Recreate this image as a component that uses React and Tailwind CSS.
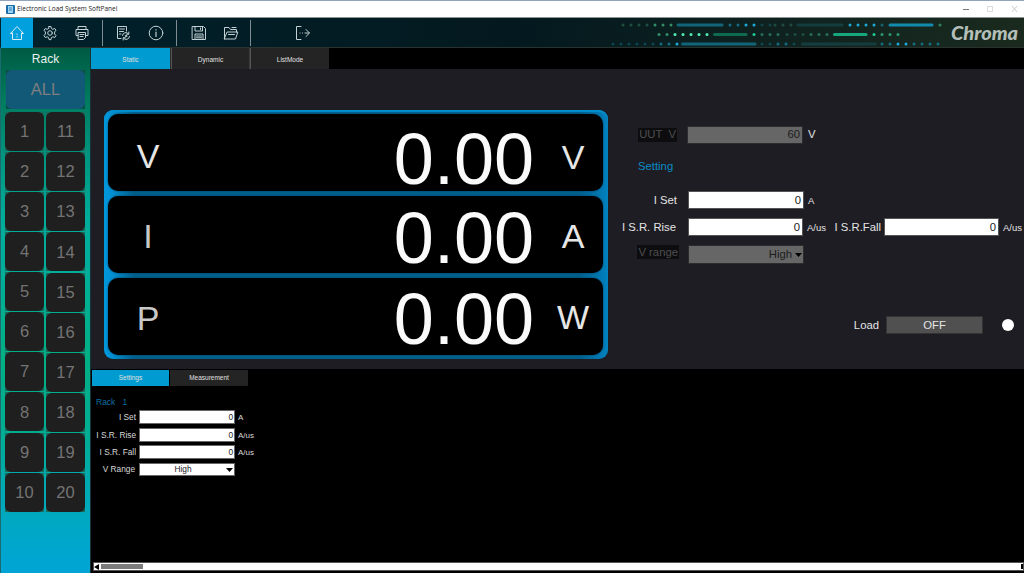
import clsx from 'clsx'

const READOUTS = [
  { name: 'V', unit: 'V', dim: 'text-[#e6e6e6]', value: 'mt-[12px]', label: 'mt-[6px]', unitPos: 'mt-[9px]' },
  { name: 'I', unit: 'A', dim: 'text-[#c8c8c8]', value: 'mt-[6px]', label: 'mt-[3px]', unitPos: 'mt-[2px]' },
  { name: 'P', unit: 'W', dim: 'text-[#c8c8c8]', value: 'mt-[5px]', label: 'mt-[2px]', unitPos: 'mt-[1px]' },
]

// [color, opacity, y, x1, x2], a dot when x1 === x2
const dots = (color, opacity, y, from, count) =>
  Array.from({ length: count }, (_, i) => [color, opacity, y, from + i * 8, from + i * 8])

const TRACES = [
  ...dots('#3d8a68', 0.45, 7, 23, 4), ...dots('#3fa97c', 0.8, 7, 55, 3),
  ['#126478', 1, 7, 78, 122],
  ...dots('#157f9c', 0.8, 7, 130, 2), ...dots('#1aa9d8', 1, 7, 146, 2),
  ...dots('#157f9c', 0.35, 7, 162, 2), ...dots('#3d8a68', 0.4, 7, 175, 3),
  ['#153d3f', 1, 7, 198, 242],
  ...dots('#1aa9d8', 1, 7, 250, 4), ...dots('#157f9c', 0.7, 7, 282, 1),
  ['#128bae', 1, 7, 290, 332], ...dots('#3fa97c', 0.7, 7, 340, 1),
  ...dots('#3fa97c', 0.8, 16.5, 59, 2), ...dots('#52edb0', 1, 16.5, 75, 5),
  ['#0f6b50', 1, 16.5, 114.5, 146],
  ...dots('#1fcb90', 1, 16.5, 154, 1), ...dots('#2f9169', 0.7, 16.5, 162, 3),
  ...dots('#2f9169', 0.4, 16.5, 187, 3), ...dots('#2f9169', 0.7, 16.5, 211, 3),
  ['#16a87c', 1, 16.5, 234.5, 266],
  ...dots('#1fcb90', 1, 16.5, 274, 1), ...dots('#2aa877', 0.9, 16.5, 282, 3),
  ...dots('#157f9c', 0.4, 26, 13, 6), ...dots('#157f9c', 0.8, 26, 61, 2),
  ...dots('#1aa9d8', 1, 26, 77, 1),
  ['#126478', 1, 26, 82.5, 155],
  ...dots('#157f9c', 0.4, 26, 162, 5), ...dots('#157f9c', 0.6, 26, 178, 2),
  ['#153d3f', 1, 26, 202.5, 275.5],
  ...dots('#157f9c', 0.8, 26, 282, 2), ...dots('#1aa9d8', 1, 26, 298, 2),
  ...dots('#157f9c', 0.8, 26, 314, 4),
]

function Icon({ className, children }) {
  return (
    <svg viewBox="0 0 16 16" className={clsx('size-4 shrink-0', className)} fill="none"
         stroke="#c3d0d4" strokeWidth="1" strokeLinejoin="round" strokeLinecap="round">
      {children}
    </svg>
  )
}

function TitleBar() {
  return (
    <header className="flex h-[18px] items-center border-t border-b border-t-[#91a3bd] border-b-[#8c9494] bg-white">
      <svg viewBox="0 0 9 9" className="ml-[6px] size-[9px]">
        <rect width="9" height="9" rx="1" fill="#1b6ea8" />
        <rect x="2" y="1" width="5" height="7" fill="#9bd3f2" />
        <path d="M3 3h3M3 5h3" stroke="#1b6ea8" strokeWidth=".8" />
      </svg>
      <span className="ml-[2px] whitespace-nowrap font-['Open_Sans',sans-serif] text-[6.5px] leading-none text-[#222]">
        Electronic Load System SoftPanel
      </span>
      <svg viewBox="0 0 60 10" className="ml-auto mr-[3px] h-[10px] w-[60px]" fill="none" strokeWidth="1">
        <path d="M2 5.5h6" stroke="#777" />
        <rect x="26.5" y="2.5" width="5" height="5" stroke="#ddd" />
        <path d="M51 2l5 6M56 2l-5 6" stroke="#ccc" />
      </svg>
    </header>
  )
}

function Divider({ className }) {
  return <i className={clsx('h-[26px] w-px bg-[#7f8c91]', className)} />
}

function Toolbar() {
  return (
    <nav className="flex h-[30px] items-center border-b border-[#29322f] bg-linear-to-r from-[#00212c] via-[#04191f] to-[#1a2a1e]">
      <button className="ml-px flex h-[30px] w-8 items-center justify-center bg-[#009fdd]">
        <Icon>
          <path d="M3.5 8v6.5h9V8M3.500 8.500h-2L8 1.500l6.500 7h-2" stroke="#d7eef7" />
          <path d="M8 9v.5M8 11.500v.5" stroke="#d7eef7" />
        </Icon>
      </button>
      <Icon className="ml-[9px]">
        <circle cx="8" cy="8" r="2.300" />
        <path d="M7 1.500h2l.4 2 1.500.8 1.900-.8 1.200 1.700L12.600 7v2l1.400 1.600-1.200 1.900-1.900-.7-1.500.8-.4 2H7l-.4-2-1.500-.8-1.900.7L2 10.600 3.400 9V7L2 5.200l1.200-1.700 1.900.8 1.500-.8z" />
      </Icon>
      <Icon className="ml-[16px]">
        <path d="M4 4V1.500h8V4M4 10.500H2V4.500h12v6h-2M4.500 7.500h7v5l-2 2h-5zM6 9.500h4M6 11.500h3" />
      </Icon>
      <Divider className="ml-[12px]" />
      <Icon className="ml-[12px]">
        <path d="M6 13.500H2.500v-12h9V6M4.500 4h5M4.500 6.500h4M4.500 9h1.500" />
        <path d="M7.500 10.500a3.300 3.300 0 0 1 6-1.500M14.500 11.500a3.300 3.300 0 0 1-6 1.500M13.800 7v2.200h-2.200M8.200 15v-2.200h2.200" />
        <circle cx="11" cy="11" r=".8" />
      </Icon>
      <Icon className="ml-[17px]">
        <circle cx="8" cy="8" r="6.800" />
        <path d="M8 7v4.500M8 4.500V5" strokeWidth="1.200" />
      </Icon>
      <Divider className="ml-[12px]" />
      <Icon className="ml-[14px]">
        <path d="M1.500 1.500h11l2 2v11h-13zM4 1.500V6h7.500V1.500M9.500 3v1.500M4 14.500V9h8v5.500M5.500 11h5M5.500 12.800h5" />
      </Icon>
      <Icon className="ml-[16px]">
        <path d="M1.500 14V2.500h4.500l1.500 2h6V7M1.500 14h11L14.800 7H4.500zM9 2.500h4M5.500 9.500h6" />
      </Icon>
      <Divider className="ml-[11px]" />
      <Icon className="ml-[44px]">
        <path d="M6 1.500H1.500v13H6M11 4.500 14.500 8 11 11.500" />
        <path d="M5 8h.1M7.500 8h.1M10 8h4" />
      </Icon>
      <svg viewBox="0 0 424 29" className="ml-auto h-[29px] w-[424px]">
        {TRACES.map(([color, opacity, y, x1, x2], i) => (
          <path key={i} d={`M${x1} ${y}H${x2 + 0.01}`} stroke={color} opacity={opacity} strokeWidth="3" strokeLinecap="round" />
        ))}
        <text x="351" y="22" textLength="67" lengthAdjust="spacingAndGlyphs" fill="#b3bfb8"
              fontFamily="Lato, sans-serif" fontStyle="italic" fontWeight="900" fontSize="18.5">Chroma</text>
      </svg>
    </nav>
  )
}

function RackButton({ n }) {
  return (
    <button className="h-[39px] bg-[#186b5c] text-[16.5px] text-[#747474]">
      <span className="flex h-full items-center justify-center rounded-[6px] bg-[#1f1f1f]">{n}</span>
    </button>
  )
}

function Sidebar() {
  return (
    <aside className="flex w-[91px] flex-col border-x border-l-[#1b6a70] border-r-[#14343a] bg-[linear-gradient(180deg,#005a43_0px,#007a5d_50px,#008d76_90px,#00ad9a_170px,#00ad9a_220px,#00b083_310px,#00ad95_390px,#00a9b8_450px,#00a5d6_524px)]">
      <div className="flex h-[21px] items-center justify-center text-[12px] text-[#e8f2ee]">Rack</div>
      <button className="ml-[5px] mt-px h-[39px] w-[79px] bg-[#0a4f41] text-[16.5px] text-[#7d7f80]">
        <span className="flex h-full items-center justify-center rounded-[6px] bg-[#125877]">ALL</span>
      </button>
      <div className="ml-[4px] mt-[2.5px] flex gap-[2px]">
        <div className="flex w-[39px] flex-col gap-[1.15px]">
          {Array.from({ length: 10 }, (_, i) => <RackButton key={i} n={i + 1} />)}
        </div>
        <div className="mt-[0.5px] flex w-[39px] flex-col gap-[1.15px]">
          {Array.from({ length: 10 }, (_, i) => <RackButton key={i} n={i + 11} />)}
        </div>
      </div>
    </aside>
  )
}

function ReadoutPanel() {
  return (
    <section className="ml-[13px] mt-[41px] flex h-[249px] w-[504px] flex-col gap-[5px] rounded-[9px] bg-[linear-gradient(90deg,#0098dc_0px,#0090d2_8px,#005f8b_30px,#005f8b_475px,#0082c0_504px)] pl-[4px] pr-[5px] pt-[4px] shadow-[inset_0_2px_1px_#008fd0]">
      {READOUTS.map(r => (
        <div key={r.name} className="flex h-[77px] items-center rounded-[10px] bg-black shadow-[0_0_2px_#003c5c]">
          <span className={clsx('w-[80px] text-center text-[34px] leading-none', r.dim, r.label)}>{r.name}</span>
          <span className="ml-auto flex items-center">
            <span className={clsx('text-[72px] leading-none text-[#fafafa]', r.value)}>0.00</span>
            <span className={clsx('ml-[9px] w-[60px] text-center text-[34px] leading-none text-[#e6e6e6]', r.unitPos)}>{r.unit}</span>
          </span>
        </div>
      ))}
    </section>
  )
}

function Field({ label, unit, className, children, labelClass, unitClass = 'ml-[4px] text-[9.5px]' }) {
  return (
    <div className={clsx('flex items-center', className)}>
      <span className={clsx('flex shrink-0 justify-end whitespace-pre', labelClass)}>{label}</span>
      {children}
      {unit && <span className={unitClass}>{unit}</span>}
    </div>
  )
}

function NumberBox({ value, className }) {
  return (
    <span className={clsx('flex shrink-0 items-center justify-end border', className)}>{value}</span>
  )
}

function SettingPanel() {
  return (
    <section className="flex w-[416px] flex-col text-[11.3px] leading-none text-[#e4e4e4]">
      <Field className="mt-[57px] h-[18px]" unit="V" unitClass="ml-[5px] text-[11.3px]" labelClass="w-[69px] mr-[10px]"
             label={<span className="bg-[#0d0d0f] px-px py-[1.5px] text-[#4e4e50]">UUT  V</span>}>
        <NumberBox value="60" className="h-[18px] w-[116px] border-[#2c2c2e] bg-[#666] pr-[2px] text-[#1c1c1c]" />
      </Field>
      <h2 className="mt-[17px] ml-[30px] text-[#0a8cc6]">Setting</h2>
      <Field className="mt-[19px] h-[18px]" label="I Set" unit="A" labelClass="w-[69px] mr-[11px]">
        <NumberBox value="0" className="h-[18px] w-[116px] border-[#555] bg-white pr-[2px] text-[#222]" />
      </Field>
      <div className="mt-[9px] flex">
        <Field className="h-[18px]" label="I S.R. Rise" unit="A/us" labelClass="w-[68px] mr-[12px]">
          <NumberBox value="0" className="h-[18px] w-[115px] border-[#555] bg-white pr-[2px] text-[#222]" />
        </Field>
        <Field className="ml-auto mr-[2px] h-[18px]" label="I S.R.Fall" unit="A/us" labelClass="mr-[3px]">
          <NumberBox value="0" className="h-[18px] w-[115px] border-[#555] bg-white pr-[2px] text-[#222]" />
        </Field>
      </div>
      <Field className="mt-[9px] h-[19px]" labelClass="w-[71px] mr-[9px] mb-[5px]"
             label={<span className="bg-[#0d0d0f] px-px py-[1.5px] text-[#4e4e50]">V range</span>}>
        <span className="flex h-[19px] w-[116px] items-center justify-end gap-[3px] border border-[#2c2c2e] bg-[#666] pr-px text-[#1c1c1c]">
          High
          <svg viewBox="0 0 7 4" className="h-[4px] w-[7px]"><path d="M0 0h7L3.5 4z" /></svg>
        </span>
      </Field>
      <div className="mt-[52px] flex items-center justify-end">
        Load
        <button className="ml-[7px] flex h-[18px] w-[97px] items-center justify-center border border-[#333] bg-[#505050]">OFF</button>
        <i className="ml-[19px] mr-[10px] size-[12px] rounded-full bg-white" />
      </div>
    </section>
  )
}

const RACK_FIELDS = [
  { label: 'I Set', unit: 'A', gap: '' },
  { label: 'I S.R. Rise', unit: 'A/us', gap: 'mt-[4px]' },
  { label: 'I S.R. Fall', unit: 'A/us', gap: 'mt-[3px]' },
]

function RackPanel() {
  return (
    <section className="flex grow flex-col bg-black pl-px pt-px">
      <div className="flex h-[16px] text-[6.5px] leading-none text-[#e0e0e0]">
        <button className="w-[77px] bg-[#009bd0] pt-px">Settings</button>
        <button className="ml-px w-[78px] bg-[#242424] pt-px">Measurement</button>
      </div>
      <div className="flex flex-col text-[8.3px] leading-none text-[#d8d8d8]">
        <h3 className="ml-[4px] mt-[12px] h-[12px] whitespace-pre text-[8.5px] text-[#0a70a4]">{'Rack   1'}</h3>
        {RACK_FIELDS.map(f => (
          <Field key={f.label} label={f.label} unit={f.unit} unitClass="ml-[3px] mt-[2px] text-[8px]"
                 className={clsx('h-[14px]', f.gap)} labelClass="w-[44px] mr-[3px]">
            <NumberBox value="0" className="h-[14px] w-[96px] border-[#666] bg-white pr-px text-[#222]" />
          </Field>
        ))}
        <Field label="V Range" className="mt-[4px] h-[13px]" labelClass="w-[43px] mr-[4px]">
          <span className="flex h-[13px] w-[96px] items-center border border-[#666] bg-white pr-px text-[#222]">
            <span className="grow text-center">High</span>
            <svg viewBox="0 0 7 4" className="h-[4px] w-[7px]"><path d="M0 0h7L3.5 4z" /></svg>
          </span>
        </Field>
      </div>
      <div className="mt-auto mb-[2px] ml-px flex h-[9px] items-center border border-[#555] bg-white">
        <svg viewBox="0 0 5 6" className="h-[6px] w-[5px]"><path d="M5 0v6L0 3z" /></svg>
        <i className="ml-[2px] h-[5px] w-[42px] bg-[#7b7b7b]" />
        <i className="ml-auto h-[5px] w-[2px] bg-black" />
      </div>
    </section>
  )
}

export default function App() {
  return (
    <div className="flex h-[573px] w-[1024px] flex-col overflow-hidden bg-black font-['Liberation_Sans',Arial,sans-serif]">
      <TitleBar />
      <Toolbar />
      <div className="flex min-h-0 grow">
        <Sidebar />
        <main className="flex min-w-0 grow flex-col">
          <div className="flex h-[21px] gap-[1.5px] text-[6.5px] leading-none text-[#e0e0e0]">
            <button className="w-[79px] bg-[#009bd0] pt-[3px]">Static</button>
            <button className="w-[78px] bg-[#242424] pt-[3px] shadow-[-1.5px_0_0_#555]">Dynamic</button>
            <button className="w-[78px] bg-[#242424] pt-[3px] shadow-[-1.5px_0_0_#555]">ListMode</button>
          </div>
          <div className="flex h-[300px] bg-[#1e1d23]">
            <ReadoutPanel />
            <SettingPanel />
          </div>
          <RackPanel />
        </main>
      </div>
    </div>
  )
}
